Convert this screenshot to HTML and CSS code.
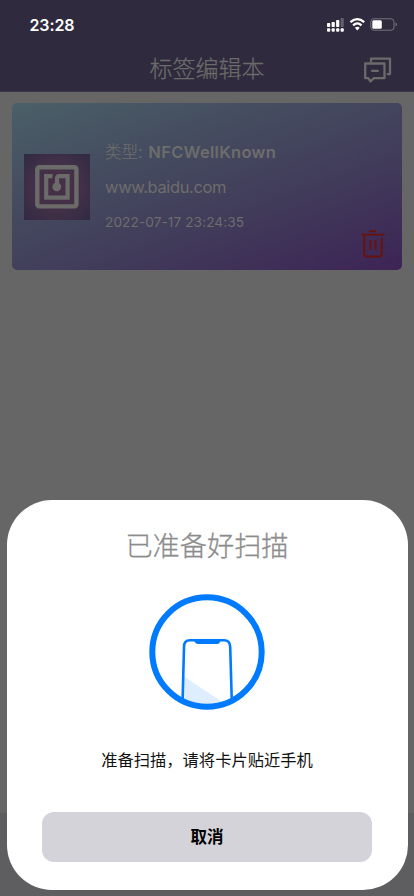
FILE: index.html
```html
<!DOCTYPE html>
<html lang="zh-CN">
<head>
<meta charset="utf-8">
<meta name="viewport" content="width=device-width, initial-scale=1">
<title>标签编辑本</title>
<link rel="stylesheet" href="styles.css">
</head>
<body>
<div class="screen">
  <header class="header">
    <div class="status">
      <span class="time">23:28</span>
      <svg class="status-icons" width="70" height="16" viewBox="0 0 70 16">
        <g fill="#fff">
          <rect x="0" y="6" width="3.2" height="4" rx=".8"/><rect x="4.6" y="5" width="3.2" height="5" rx=".8"/><rect x="9.1" y="3" width="3.2" height="7" rx=".8"/>
          <rect x="13.6" y="1" width="3.2" height="9" rx=".8" opacity=".25"/>
          <rect x="0" y="11.3" width="3.2" height="3.4" rx="1"/><rect x="4.6" y="11.3" width="3.2" height="3.4" rx="1"/><rect x="9.1" y="11.3" width="3.2" height="3.4" rx="1"/><rect x="13.6" y="11.3" width="3.2" height="3.4" rx="1"/>
        </g>
        <path d="M23.4 5.2Q30.3-.9 37.2 5.2M26.1 8.3Q30.3 4.4 34.5 8.3" fill="none" stroke="#fff" stroke-width="2.3"/>
        <path d="M27.9 10.8Q30.3 8.9 32.7 10.8L30.3 13.4z" fill="#fff"/>
        <rect x="43.8" y="1.8" width="23.2" height="11.4" rx="3" fill="none" stroke="#77727f"/>
        <rect x="45.3" y="3.3" width="9.5" height="8.4" rx="1.5" fill="#fff"/>
        <path d="M68.6 5.5c2 .8 2 3.2 0 4z" fill="#77727f"/>
      </svg>
    </div>
    <div class="titlebar">
      <h1>标签编辑本</h1>
      <svg class="messages" width="30" height="28" viewBox="0 0 30 28" fill="none" stroke="#6c6b69" stroke-width="2.3" stroke-linejoin="round" stroke-linecap="round">
        <path d="M2.2 7.5h19.3v14.7H11l-3.6 3.2-2.2-3.2h-3z"/><path d="M8 5.2V2.7h19v15.4h-2.3M9 14.8h6"/>
      </svg>
    </div>
  </header>
  <main>
    <article class="card">
      <div class="thumb">
        <svg width="44" height="44" viewBox="0 0 44 44" fill="none" stroke="#6b6b6a">
          <rect x="2.3" y="2.3" width="39.1" height="39.1" rx="2" stroke-width="4.4"/>
          <path d="M17.5 11.1H11.2V32.7H32.6V11.1H24.2Q22 11.1 22 14V20" stroke-width="4.2"/>
          <circle cx="21.8" cy="21.8" r="4.4" fill="#6b6b6a" stroke="none"/>
        </svg>
      </div>
      <div class="details">
        <div class="type">类型: <b>NFCWellKnown</b></div>
        <div class="url">www.baidu.com</div>
        <div class="date">2022-07-17 23:24:35</div>
      </div>
      <svg class="trash" width="24" height="28" viewBox="0 0 24 28" fill="none" stroke="#69120b" stroke-width="1.9" stroke-linecap="round" stroke-linejoin="round">
        <path d="M9 1.2h5M1 4.6h22M3.2 5v18.5q0 3 3 3h11.6q3 0 3-3V8.8M9.4 11v8.2M14.6 11v8.2"/>
      </svg>
    </article>
  </main>
  <section class="sheet">
    <h2>已准备好扫描</h2>
    <svg class="scan" width="116" height="116" viewBox="0 0 116 116">
      <defs><clipPath id="ring"><circle cx="58" cy="58" r="54"/></clipPath></defs>
      <g clip-path="url(#ring)">
        <path d="M35 82.5L82 114H34z" fill="#deedff"/>
        <path d="M33.4 114L35 53Q35 46.3 41 46.3H75Q81 46.3 81.2 53L83 114" fill="none" stroke="#007aff" stroke-width="2.6"/>
        <path d="M45 46H71.5Q71 50 68 50H49Q46 50 45 46z" fill="#007aff"/>
      </g>
      <circle cx="58" cy="58" r="54.7" fill="none" stroke="#007aff" stroke-width="6"/>
    </svg>
    <p>准备扫描，请将卡片贴近手机</p>
    <button type="button">取消</button>
  </section>
</div>
</body>
</html>
```

FILE: styles.css
```css
* { box-sizing: border-box; }
body { margin: 0; font-family: Inter, "Noto Sans CJK SC", sans-serif; }
h1, h2, p { margin: 0; }
svg { display: block; flex: none; }
.screen {
  width: 414px; height: 896px; overflow: hidden;
  display: flex; flex-direction: column;
  background: linear-gradient(#666 813px, #5e5e60 813px);
}
.header { height: 92px; background: #2f2a3e; border-bottom: 1px solid #3c3848; }
.status {
  height: 46px; padding: 4px 16px 0 29.5px;
  display: flex; align-items: center; justify-content: space-between;
}
.time { color: #fff; font-size: 16px; line-height: 20px; font-weight: 600; letter-spacing: -.1px; }
.status-icons { margin-right: 1px; }
.titlebar { height: 46px; display: grid; grid-template-columns: 1fr auto 1fr; align-items: center; }
.titlebar h1 { grid-column: 2; color: #6c6b69; font-size: 23px; line-height: 34px; font-weight: 300; -webkit-text-stroke: .25px #6c6b69; }
.messages { justify-self: end; margin-right: 21px; margin-top: 2px; }
main { flex: 1; padding: 11px 12px 0; }
.card {
  height: 167px; border-radius: 5px; padding: 0 17px 0 12px;
  display: flex; align-items: center;
  background: linear-gradient(160deg, #4a6068 0%, #454d60 30%, #413c5a 62%, #3d2456 100%);
}
.thumb {
  width: 66px; height: 66px; display: grid; place-items: center;
  background: radial-gradient(circle, #483047, #413047 55%, #302a43);
}
.details { flex: 1; margin-left: 15px; margin-top: -1px; color: #6d6d6b; white-space: nowrap; }
.type { font-size: 16.5px; line-height: 24px; height: 24px; font-weight: 300; -webkit-text-stroke: .15px #6d6d6b; }
.type b { font-weight: 600; margin-left: 1px; letter-spacing: .3px; -webkit-text-stroke: 0; }
.url { font-size: 16.5px; line-height: 24px; margin-top: 11px; letter-spacing: -.37px; }
.date { font-size: 13.7px; line-height: 20px; margin-top: 13px; letter-spacing: .06px; }
.trash { align-self: flex-end; margin-bottom: 12px; }
.sheet {
  width: 401px; height: 390px; margin: 0 0 6px 6.5px; padding: 27px 35.5px 28px;
  border-radius: 45px; background: #fff; text-align: center;
  display: flex; flex-direction: column; align-items: center;
}
.sheet h2 { font-size: 27.2px; line-height: 40px; font-weight: 300; color: #8c8c8c; -webkit-text-stroke: .3px #8c8c8c; }
.scan { margin-top: 26.5px; }
.sheet p { margin-top: 37.5px; font-size: 16.3px; line-height: 26px; color: #111; }
.sheet button {
  margin-top: auto; width: 100%; height: 50px; border: 0; border-radius: 12px;
  background: #d4d3da; color: #000; font: 600 16.5px/24px Inter, "Noto Sans CJK SC", sans-serif;
}
```
